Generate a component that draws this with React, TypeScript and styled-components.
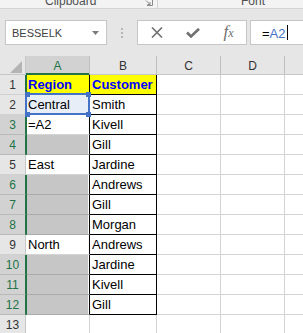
import React from 'react';
import styled, { createGlobalStyle } from 'styled-components';

const GREEN = '#217346';
const BLUE = '#4472c4';

const Global = createGlobalStyle`
  html, body { margin: 0; padding: 0; background: #e6e6e6; overflow: hidden; }
  body { font-family: "Liberation Sans", Arial, sans-serif; }
  * { box-sizing: border-box; }
`;

const Page = styled.div`
  width: 303px;
  height: 333px;
  overflow: hidden;
  display: flex;
  flex-direction: column;
  background: #e6e6e6;
`;

const Ribbon = styled.div`
  height: 9px;
  flex-shrink: 0;
  display: flex;
  background: #f3f3f3;
  border-bottom: 1px solid #d4d4d4;
  overflow: hidden;
`;

const RibbonGroup = styled.div<{ $w?: number; $pl: number }>`
  ${p => (p.$w ? `width: ${p.$w}px;` : 'flex: 1;')}
  padding-left: ${p => p.$pl}px;
  display: flex;
  align-items: flex-start;
  border-right: ${p => (p.$w ? '1px solid #d4d4d4' : 'none')};
`;

const RibbonLabel = styled.span`
  font-size: 12px;
  line-height: 12px;
  margin-top: -5px;
  color: #505050;
  white-space: nowrap;
`;

const Launcher = styled.svg`
  margin-left: auto;
  margin-right: 4px;
  flex-shrink: 0;
`;

const FormulaRow = styled.div`
  height: 47px;
  flex-shrink: 0;
  padding-top: 11px;
  display: flex;
  align-items: flex-start;
`;

const NameBox = styled.div`
  margin-left: 5px;
  width: 102px;
  height: 25px;
  background: #fff;
  border: 1px solid #c6c6c6;
  display: flex;
  align-items: center;
  padding: 1px 7px 0 6px;
  font-size: 11px;
  color: #404040;
`;

const Caret = styled.svg`
  margin-left: auto;
`;

const Dots = styled.div`
  margin-left: 14px;
  height: 25px;
  display: flex;
  flex-direction: column;
  justify-content: center;
  gap: 2px;
`;

const Dot = styled.span`
  width: 2px;
  height: 2px;
  background: #b5b5b5;
`;

const FxBox = styled.div`
  margin-left: 14px;
  width: 110px;
  height: 25px;
  background: #fff;
  border: 1px solid #c6c6c6;
  padding-left: 1px;
  display: grid;
  grid-template-columns: 36px 36px 36px;
  align-items: center;
  justify-items: center;
`;

const Fx = styled.span`
  font-family: "Liberation Serif", "Times New Roman", serif;
  font-style: italic;
  font-size: 17px;
  line-height: 17px;
  color: #6f6f6f;
  margin-left: -1px;
  sub {
    font-size: 12px;
    vertical-align: baseline;
  }
`;

const FormulaInput = styled.div`
  margin-left: 3px;
  flex: 1;
  height: 25px;
  background: #fff;
  border: 1px solid #c6c6c6;
  border-right: none;
  padding: 2px 0 0 11px;
  display: flex;
  align-items: center;
  font-size: 13px;
  color: #000;
`;

const Ref = styled.span`
  color: ${BLUE};
`;

const Cursor = styled.span`
  display: inline-block;
  width: 1px;
  height: 15px;
  background: #000;
  margin-left: 1px;
  margin-top: -2px;
`;

const Sheet = styled.div`
  flex: 1;
  display: grid;
  grid-template-columns: 26px 64px 67px 64px 64px 64px;
  grid-template-rows: 19px;
  grid-auto-rows: 20px;
  background: #fff;
  overflow: hidden;
`;

const Corner = styled.div`
  background: #e6e6e6;
  border-right: 1px solid #c6c6c6;
  border-bottom: 1px solid #c6c6c6;
  display: flex;
  justify-content: flex-end;
  align-items: flex-end;
  padding: 0 3px 1px 0;
`;

const ColHead = styled.div<{ $sel?: boolean }>`
  background: ${p => (p.$sel ? '#d2d2d2' : '#e6e6e6')};
  color: ${p => (p.$sel ? GREEN : '#333')};
  border-right: 1px solid #c0c0c0;
  border-bottom: 1px solid ${p => (p.$sel ? GREEN : '#c6c6c6')};
  box-shadow: ${p => (p.$sel ? `inset 0 -1px 0 ${GREEN}` : 'none')};
  font-size: 12px;
  line-height: 18px;
  padding-top: 1px;
  text-align: center;
`;

const RowHead = styled.div<{ $sel?: boolean; $line?: boolean }>`
  position: relative;
  z-index: ${p => (p.$line ? 2 : 0)};
  background: ${p => (p.$sel ? '#d2d2d2' : '#e6e6e6')};
  color: ${p => (p.$sel ? GREEN : '#333')};
  border-right: 1px solid ${p => (p.$line ? GREEN : '#c6c6c6')};
  border-bottom: 1px solid ${p => (p.$sel ? '#b9b9b9' : '#d0d0d0')};
  box-shadow: ${p => (p.$line ? `1px 0 0 ${GREEN}` : 'none')};
  font-size: 12px;
  line-height: 18px;
  padding-top: 1px;
  text-align: center;
`;

const Cell = styled.div<{
  $fill?: string;
  $right?: string;
  $bottom?: string;
  $bold?: boolean;
  $color?: string;
  $inset?: boolean;
}>`
  position: relative;
  background: ${p => p.$fill || '#fff'};
  border-right: 1px solid ${p => p.$right || '#d4d4d4'};
  border-bottom: 1px solid ${p => p.$bottom || '#d4d4d4'};
  box-shadow: ${p => (p.$inset ? 'inset -1px 0 0 #fff' : 'none')};
  font-size: 13px;
  line-height: 19px;
  font-weight: ${p => (p.$bold ? 700 : 400)};
  color: ${p => p.$color || '#000'};
  padding-left: 2px;
  white-space: nowrap;
`;

const RefBox = styled.div`
  position: absolute;
  left: -1px;
  top: -2px;
  width: 65px;
  height: 22px;
  border: 2px solid ${BLUE};
  z-index: 3;
  pointer-events: none;
`;

const Handle = styled.span<{ $x: number; $y: number }>`
  position: absolute;
  left: ${p => p.$x}px;
  top: ${p => p.$y}px;
  width: 5px;
  height: 5px;
  background: ${BLUE};
`;

// the fifth column's letter lies beyond the visible edge
const cols = ['A', 'B', 'C', 'D', ''];

const data: [string, string][] = [
  ['Region', 'Customer'],
  ['Central', 'Smith'],
  ['=A2', 'Kivell'],
  ['', 'Gill'],
  ['East', 'Jardine'],
  ['', 'Andrews'],
  ['', 'Gill'],
  ['', 'Morgan'],
  ['North', 'Andrews'],
  ['', 'Jardine'],
  ['', 'Kivell'],
  ['', 'Gill'],
  ['', ''],
];

const selRows = new Set([3, 4, 6, 7, 8, 10, 11, 12]);
const greyRows = new Set([4, 6, 7, 8, 10, 11, 12]);
const lineRows = new Set([1, 3, 4, 6, 7, 8, 10, 11, 12]);

export default function App() {
  return (
    <Page>
      <Global />
      <Ribbon>
        <RibbonGroup $w={158} $pl={45}>
          <RibbonLabel>Clipboard</RibbonLabel>
          <Launcher width="9" height="6" viewBox="0 0 9 6">
            <path d="M8.5 0 V5.5 H3" fill="none" stroke="#8a8a8a" strokeWidth="1" />
            <path d="M2 0.5 L6 4.5 M6 2 V4.5 H3.5" fill="none" stroke="#8a8a8a" strokeWidth="1" />
          </Launcher>
        </RibbonGroup>
        <RibbonGroup $pl={83}>
          <RibbonLabel>Font</RibbonLabel>
        </RibbonGroup>
      </Ribbon>

      <FormulaRow>
        <NameBox>
          BESSELK
          <Caret width="7" height="4" viewBox="0 0 7 4">
            <polygon points="0,0 7,0 3.5,4" fill="#7a7a7a" />
          </Caret>
        </NameBox>
        <Dots>
          <Dot />
          <Dot />
          <Dot />
        </Dots>
        <FxBox>
          <svg width="12" height="11" viewBox="0 0 12 11">
            <path d="M1 0.5 L11 10.5 M11 0.5 L1 10.5" stroke="#707070" strokeWidth="1.6" fill="none" />
          </svg>
          <svg width="14" height="10" viewBox="0 0 14 10">
            <polyline points="1,4.5 5,8.5 13,0.8" stroke="#707070" strokeWidth="2.6" fill="none" />
          </svg>
          <Fx>
            f<sub>x</sub>
          </Fx>
        </FxBox>
        <FormulaInput>
          =<Ref>A2</Ref>
          <Cursor />
        </FormulaInput>
      </FormulaRow>

      <Sheet>
        <Corner>
          <svg width="12" height="12" viewBox="0 0 12 12">
            <polygon points="12,0 12,12 0,12" fill="#b4b4b4" />
          </svg>
        </Corner>
        {cols.map((c, i) => (
          <ColHead key={i} $sel={c === 'A'}>
            {c}
          </ColHead>
        ))}
        {data.map(([a, b], idx) => {
          const r = idx + 1;
          const inTable = r <= 12;
          const header = r === 1;
          const grey = greyRows.has(r);
          return (
            <React.Fragment key={r}>
              <RowHead $sel={selRows.has(r)} $line={lineRows.has(r)}>
                {r}
              </RowHead>
              <Cell
                $fill={header ? '#ffff00' : r === 2 ? '#e8eef8' : grey ? '#c6c6c6' : undefined}
                $right={inTable ? '#000' : undefined}
                $bottom={header ? '#000' : grey ? '#ababab' : undefined}
                $inset={grey}
                $bold={header}
                $color={header ? '#0000ff' : undefined}
              >
                {a}
                {r === 2 && (
                  <RefBox>
                    <Handle $x={-2} $y={-3} />
                    <Handle $x={59} $y={-3} />
                    <Handle $x={-2} $y={17} />
                    <Handle $x={59} $y={17} />
                  </RefBox>
                )}
              </Cell>
              <Cell
                $fill={header ? '#ffff00' : undefined}
                $right={inTable ? '#000' : undefined}
                $bottom={inTable ? '#000' : undefined}
                $bold={header}
                $color={header ? '#0000ff' : undefined}
              >
                {b}
              </Cell>
              <Cell />
              <Cell />
              <Cell />
            </React.Fragment>
          );
        })}
      </Sheet>
    </Page>
  );
}
